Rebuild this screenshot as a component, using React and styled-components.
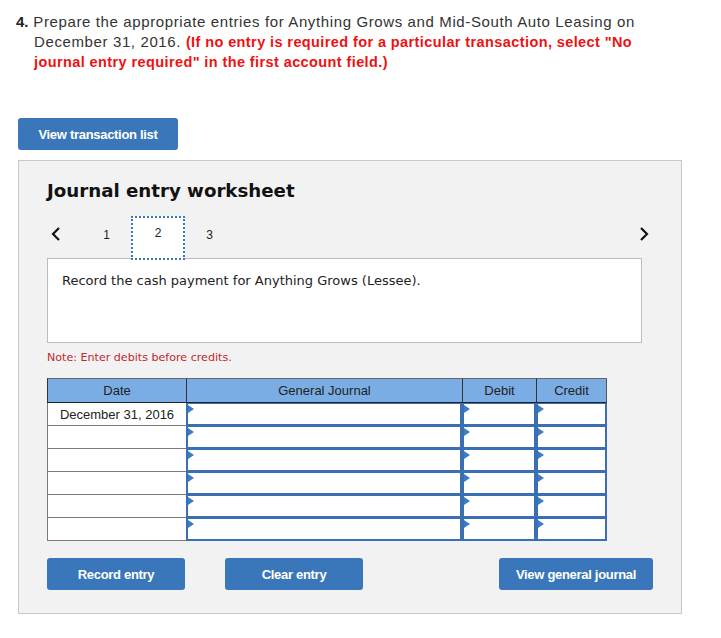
import React from "react";
import styled, { createGlobalStyle } from "styled-components";

const GlobalStyle = createGlobalStyle`
  body {
    margin: 0;
    background: #ffffff;
    font-family: "Liberation Sans", Arial, sans-serif;
  }
`;

const rows = ["December 31, 2016", "", "", "", "", ""];

const ChevronLeft = () => (
  <svg width="12" height="16" viewBox="0 0 12 16">
    <path d="M9 2 L3 8 L9 14" fill="none" stroke="#111" strokeWidth="2.2" />
  </svg>
);

const ChevronRight = () => (
  <svg width="12" height="16" viewBox="0 0 12 16">
    <path d="M3 2 L9 8 L3 14" fill="none" stroke="#111" strokeWidth="2.2" />
  </svg>
);

const App = () => {
  return (
    <>
      <GlobalStyle />
      <Page>
        <Question>
          <Num>4.</Num> Prepare the appropriate entries for Anything Grows and Mid-South Auto Leasing on
          December 31, 2016. <Warn>(If no entry is required for a particular transaction, select "No
          journal entry required" in the first account field.)</Warn>
        </Question>

        <TopButton>View transaction list</TopButton>

        <Panel>
          <Title>Journal entry worksheet</Title>

          <NavRow>
            <Arrow><ChevronLeft /></Arrow>
            <Tab>1</Tab>
            <Tab active>2</Tab>
            <Tab>3</Tab>
            <Arrow right><ChevronRight /></Arrow>
          </NavRow>

          <Description>Record the cash payment for Anything Grows (Lessee).</Description>

          <Note>Note: Enter debits before credits.</Note>

          <Grid>
            <HeadCell>Date</HeadCell>
            <HeadCell>General Journal</HeadCell>
            <HeadCell>Debit</HeadCell>
            <HeadCell>Credit</HeadCell>
            {rows.map((date, i) => (
              <React.Fragment key={i}>
                <DateCell>{date}</DateCell>
                <InputCell><Marker /></InputCell>
                <InputCell><Marker /></InputCell>
                <InputCell><Marker /></InputCell>
              </React.Fragment>
            ))}
          </Grid>

          <ButtonRow>
            <ActionButton width={138}>Record entry</ActionButton>
            <ActionButton width={138}>Clear entry</ActionButton>
            <ActionButton width={154} push>View general journal</ActionButton>
          </ButtonRow>
        </Panel>
      </Page>
    </>
  );
};

export default App;

const Page = styled.div`
  padding-top: 12px;
  padding-bottom: 24px;
`;

const Question = styled.p`
  margin: 0 0 0 34px;
  width: 616px;
  text-indent: -18px;
  font-size: 15px;
  line-height: 20px;
  letter-spacing: 0.62px;
  color: #333;
`;

const Num = styled.b`
  color: #222;
  letter-spacing: 0;
`;

const Warn = styled.b`
  color: #ee1111;
  font-size: 14.5px;
  letter-spacing: 0.4px;
`;

const TopButton = styled.div`
  margin: 46px 0 0 18px;
  width: 160px;
  height: 32px;
  display: flex;
  align-items: center;
  justify-content: center;
  background: #3a77ba;
  border-radius: 3px;
  color: #fff;
  font-family: "Liberation Sans Narrow", "Liberation Sans", Arial, sans-serif;
  font-weight: 700;
  font-size: 13px;
  letter-spacing: -0.3px;
`;

const Panel = styled.div`
  margin: 10px 0 0 18px;
  width: 664px;
  box-sizing: border-box;
  padding: 18px 28px 23px;
  background: #f2f2f2;
  border: 1px solid #c8c8c8;
`;

const Title = styled.h2`
  margin: 0;
  font-family: "DejaVu Sans", Verdana, sans-serif;
  font-size: 18.2px;
  line-height: 24px;
  font-weight: 700;
  color: #111;
`;

const NavRow = styled.div`
  margin-top: 13px;
  height: 43px;
  display: flex;
  align-items: flex-start;
  position: relative;
  z-index: 1;
`;

const Arrow = styled.div`
  width: 34px;
  padding-top: 10px;
  display: flex;
  justify-content: ${(p) => (p.right ? "flex-end" : "flex-start")};
  padding-left: ${(p) => (p.right ? "0" : "3px")};
  padding-right: ${(p) => (p.right ? "3px" : "0")};
  margin-left: ${(p) => (p.right ? "auto" : "0")};
  box-sizing: border-box;
`;

const Tab = styled.div`
  box-sizing: border-box;
  display: flex;
  justify-content: center;
  padding-top: ${(p) => (p.active ? "8px" : "10px")};
  font-size: 12px;
  line-height: 14px;
  color: #222;
  background: ${(p) => (p.active ? "#fff" : "transparent")};
  border: ${(p) => (p.active ? "2px dotted #3a77ba" : "2px solid transparent")};
  margin: ${(p) => (p.active ? "0 -1px" : "0")};
  width: ${(p) => (p.active ? "54px" : "51px")};
  height: ${(p) => (p.active ? "44px" : "42px")};
`;

const Description = styled.div`
  margin-top: -1px;
  width: 595px;
  height: 85px;
  box-sizing: border-box;
  padding: 14px 14px;
  background: #fff;
  border: 1px solid #bdbdbd;
  font-family: "DejaVu Sans", Verdana, sans-serif;
  font-size: 13px;
  line-height: 16px;
  color: #222;
`;

const Note = styled.div`
  margin-top: 8px;
  font-family: "DejaVu Sans", Verdana, sans-serif;
  font-size: 11.1px;
  line-height: 14px;
  color: #c1272d;
`;

const Grid = styled.div`
  margin-top: 13px;
  width: 560px;
  display: grid;
  grid-template-columns: 139px 276px 74px 71px;
  grid-template-rows: 25px repeat(6, 23px);
  background: #fff;
`;

const HeadCell = styled.div`
  display: flex;
  align-items: center;
  justify-content: center;
  box-sizing: border-box;
  background: #7aade3;
  border-top: 1px solid #666;
  border-left: 1px solid #333;
  border-bottom: 1px solid #222;
  &:nth-child(4) {
    border-right: 1px solid #555;
  }
  font-size: 13px;
  color: #222;
`;

const DateCell = styled.div`
  box-sizing: border-box;
  display: flex;
  align-items: center;
  justify-content: center;
  background: #fff;
  border-left: 1px solid #7a7a7a;
  border-bottom: 1px solid #7a7a7a;
  font-size: 13px;
  color: #222;
`;

const InputCell = styled.div`
  position: relative;
  box-sizing: border-box;
  background: #fff;
  border: 2px solid #3b6fb3;
  border-top-width: 1px;
`;

const Marker = styled.span`
  position: absolute;
  top: 1px;
  left: 0;
  width: 0;
  height: 0;
  border-left: 6px solid #3a7cc6;
  border-top: 4px solid transparent;
  border-bottom: 4px solid transparent;
`;

const ButtonRow = styled.div`
  margin-top: 17px;
  display: flex;
  gap: 40px;
`;

const ActionButton = styled.div`
  width: ${(p) => p.width}px;
  height: 32px;
  margin-left: ${(p) => (p.push ? "auto" : "0")};
  display: flex;
  align-items: center;
  justify-content: center;
  background: #3a77ba;
  border-radius: 3px;
  color: #fff;
  font-family: "Liberation Sans Narrow", "Liberation Sans", Arial, sans-serif;
  font-weight: 700;
  font-size: 13px;
  letter-spacing: -0.3px;
`;
